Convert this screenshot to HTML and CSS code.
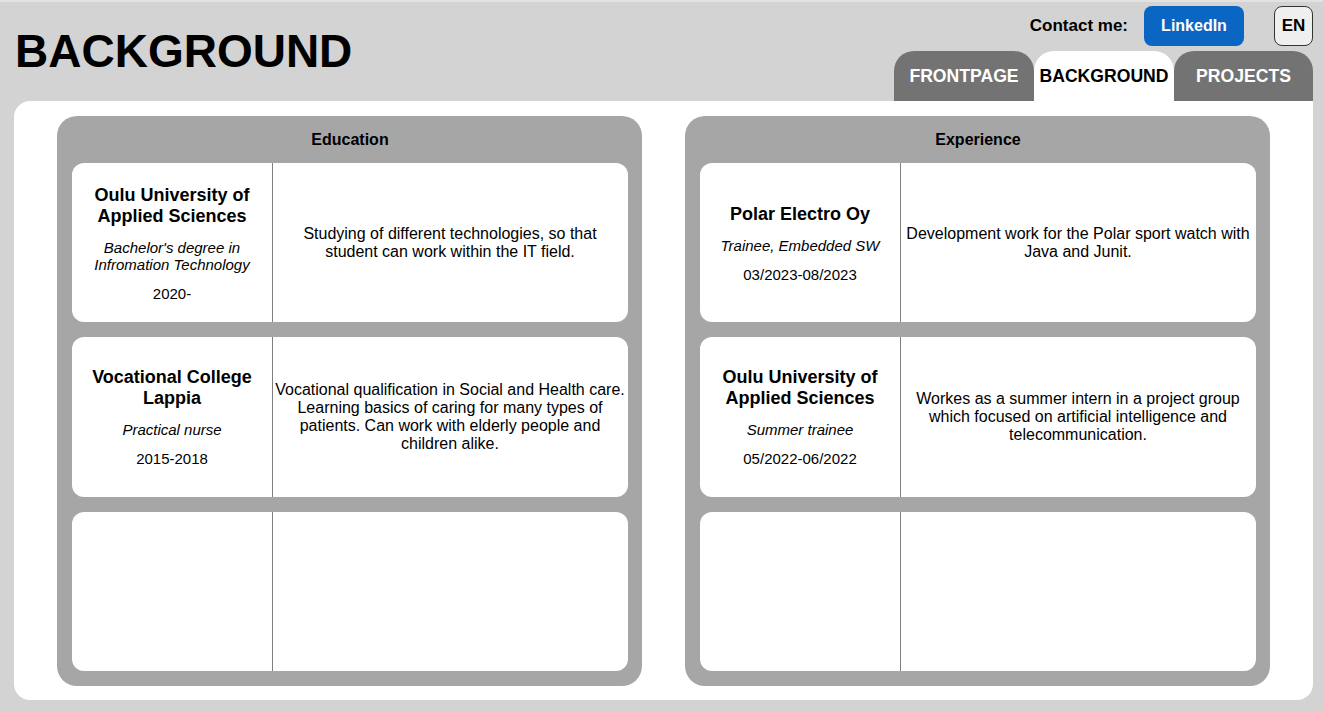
FILE: index.html
```html
<!DOCTYPE html>
<html lang="en">
<head>
  <meta charset="UTF-8" />
  <meta name="viewport" content="width=device-width, initial-scale=1.0" />
  <title>Background</title>
  <link rel="stylesheet" href="styles.css">
</head>
<body>
  <header class="top">
    <h1>BACKGROUND</h1>
    <div class="top-right">
      <div class="contact">
        <span class="contact-label">Contact me:</span>
        <a class="linkedin" href="#">LinkedIn</a>
        <button class="lang">EN</button>
      </div>
      <nav class="tabs">
        <a class="tab" href="#">FRONTPAGE</a>
        <a class="tab active" href="#">BACKGROUND</a>
        <a class="tab" href="#">PROJECTS</a>
      </nav>
    </div>
  </header>

  <main class="panel">
    <section class="column">
      <h2>Education</h2>
      <div class="card">
        <div class="card-info">
          <h3>Oulu University of Applied Sciences</h3>
          <p class="role">Bachelor's degree in Infromation Technology</p>
          <p class="date">2020-</p>
        </div>
        <div class="card-desc">Studying of different technologies, so that student can work within the IT field.</div>
      </div>
      <div class="card">
        <div class="card-info">
          <h3>Vocational College Lappia</h3>
          <p class="role">Practical nurse</p>
          <p class="date">2015-2018</p>
        </div>
        <div class="card-desc">Vocational qualification in Social and Health care. Learning basics of caring for many types of patients. Can work with elderly people and children alike.</div>
      </div>
      <div class="card">
        <div class="card-info"></div>
        <div class="card-desc"></div>
      </div>
    </section>

    <section class="column">
      <h2>Experience</h2>
      <div class="card">
        <div class="card-info">
          <h3>Polar Electro Oy</h3>
          <p class="role">Trainee, Embedded SW</p>
          <p class="date">03/2023-08/2023</p>
        </div>
        <div class="card-desc">Development work for the Polar sport watch with Java and Junit.</div>
      </div>
      <div class="card">
        <div class="card-info">
          <h3>Oulu University of Applied Sciences</h3>
          <p class="role">Summer trainee</p>
          <p class="date">05/2022-06/2022</p>
        </div>
        <div class="card-desc">Workes as a summer intern in a project group which focused on artificial intelligence and telecommunication.</div>
      </div>
      <div class="card">
        <div class="card-info"></div>
        <div class="card-desc"></div>
      </div>
    </section>
  </main>
</body>
</html>
```

FILE: styles.css
```css
body {
  font-family: 'Liberation Sans', Arial, sans-serif;
  background-color: #d3d3d3;
  color: #000;
  margin: 0;
  border-top: 2px solid #e2e2e2;
}
.top {
  display: flex;
  justify-content: space-between;
  height: 99px;
  padding: 0 10px 0 15px;
}
h1 {
  margin: 0;
  padding-top: 26px;
  font-size: 46px;
  line-height: 46px;
  font-weight: bold;
}
.top-right {
  display: flex;
  flex-direction: column;
  justify-content: space-between;
  align-items: flex-end;
}
.contact {
  display: flex;
  align-items: center;
  margin-top: 4px;
}
.contact-label {
  font-size: 17px;
  font-weight: bold;
  margin-right: 16px;
}
.linkedin {
  width: 100px;
  height: 40px;
  line-height: 40px;
  text-align: center;
  background: #0a66c2;
  color: #fff;
  font-weight: bold;
  font-size: 16px;
  text-decoration: none;
  border-radius: 8px;
}
.lang {
  margin-left: 30px;
  width: 39px;
  height: 40px;
  padding: 0;
  background: #efefef;
  border: 1px solid #333;
  border-radius: 8px;
  font-family: inherit;
  font-weight: bold;
  font-size: 17px;
  color: #000;
}
.tabs {
  display: flex;
}
.tab {
  width: 140px;
  height: 50px;
  line-height: 50px;
  text-align: center;
  background: #737373;
  color: #fff;
  font-weight: bold;
  font-size: 17.6px;
  text-decoration: none;
  border-radius: 20px 20px 0 0;
}
.tab:last-child {
  width: 139px;
}
.tab.active {
  background: #fff;
  color: #000;
}
.panel {
  background: #fff;
  margin: 0 10px 0 14px;
  height: 570px;
  padding: 15px 0 14px;
  border-radius: 16px 0 16px 16px;
  display: flex;
  justify-content: space-evenly;
}
.column {
  width: 585px;
  box-sizing: border-box;
  background: #a6a6a6;
  border-radius: 20px;
  padding: 0 14px 15px 15px;
  display: flex;
  flex-direction: column;
  gap: 15px;
}
.column h2 {
  margin: 0 0 -15px;
  height: 47px;
  line-height: 47px;
  text-align: center;
  font-size: 16px;
  font-weight: bold;
}
.card {
  flex: 1;
  background: #fff;
  border-radius: 12px;
  display: grid;
  grid-template-columns: 200px 1fr;
}
.card-info {
  display: flex;
  flex-direction: column;
  justify-content: center;
  text-align: center;
  padding: 1px 8px 0;
}
.card-info h3 {
  margin: 0;
  font-size: 18px;
  line-height: 21px;
}
.card-info p {
  margin: 12px 0 0;
  font-size: 15px;
  line-height: 17px;
}
.role {
  font-style: italic;
}
.card-desc {
  border-left: 1px solid #808080;
  display: flex;
  align-items: center;
  justify-content: center;
  text-align: center;
  padding: 0 3px 0 2px;
  font-size: 16px;
  line-height: 18px;
}
```
